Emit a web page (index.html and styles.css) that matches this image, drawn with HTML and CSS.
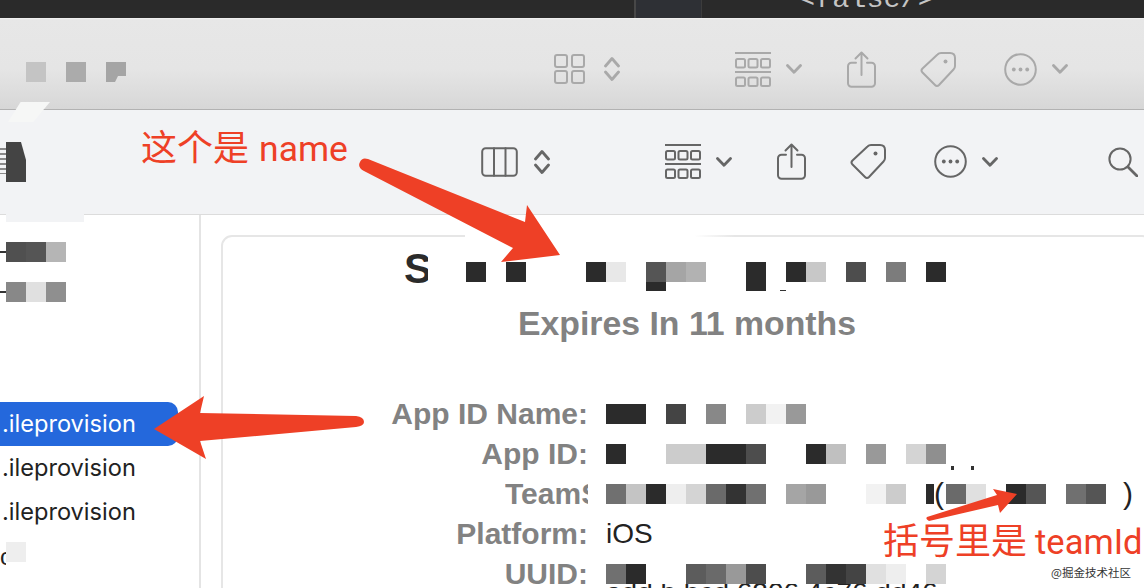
FILE: index.html
```html
<!DOCTYPE html>
<html lang="zh-CN">
<head>
  <meta charset="UTF-8" />
  <title>Provisioning profile</title>
  <link rel="stylesheet" href="styles.css">
</head>
<body>
  <svg class="defs" width="0" height="0">
    <symbol id="i-grid" viewBox="0 0 32 30">
      <rect x="2" y="1" width="12" height="12" rx="2"/><rect x="19" y="1" width="12" height="12" rx="2"/>
      <rect x="2" y="17" width="12" height="12" rx="2"/><rect x="19" y="17" width="12" height="12" rx="2"/>
    </symbol>
    <symbol id="i-cols" viewBox="0 0 37 30">
      <rect x="1.2" y="1.2" width="34.6" height="27.6" rx="3.5"/><path d="M13 1.2V28.8M24.5 1.2V28.8"/>
    </symbol>
    <symbol id="i-updown" viewBox="0 0 16 26">
      <path class="thick" d="M1.5 10L8 2.5L14.5 10M1.5 16L8 23.5L14.5 16"/>
    </symbol>
    <symbol id="i-group" viewBox="0 0 36 35">
      <path d="M0 1H36M0 20H36"/>
      <rect x="1" y="7" width="9" height="8.5" rx="1.5"/><rect x="13.5" y="7" width="9" height="8.5" rx="1.5"/><rect x="26" y="7" width="9" height="8.5" rx="1.5"/>
      <rect x="1" y="25.5" width="9" height="8.5" rx="1.5"/><rect x="13.5" y="25.5" width="9" height="8.5" rx="1.5"/><rect x="26" y="25.5" width="9" height="8.5" rx="1.5"/>
    </symbol>
    <symbol id="i-chev" viewBox="0 0 16 10">
      <path class="thick" d="M1.5 1.5L8 8.2L14.5 1.5"/>
    </symbol>
    <symbol id="i-share" viewBox="0 0 29 37">
      <path d="M9 11.7H4.5A3.5 3.5 0 0 0 1 15.2V32.2A3.5 3.5 0 0 0 4.5 35.7H24.5A3.5 3.5 0 0 0 28 32.2V15.2A3.5 3.5 0 0 0 24.5 11.7H20"/>
      <path d="M14.5 1.5V24M8.5 7.5L14.5 1.5L20.5 7.5"/>
    </symbol>
    <symbol id="i-tag" viewBox="0 0 37 37">
      <path d="M21 2H30Q35 2 35 7V15Q35 17 33.5 18.5L19 34Q17 36 15 34L2.5 21.5Q.5 19.5 2.5 17.5L17.5 3.5Q19 2 21 2Z"/>
      <circle class="dot" cx="25.5" cy="10.5" r="2"/>
    </symbol>
    <symbol id="i-more" viewBox="0 0 33 33">
      <circle cx="16.5" cy="16.5" r="15.3"/>
      <circle class="dot" cx="9.8" cy="16.5" r="1.9"/><circle class="dot" cx="16.5" cy="16.5" r="1.9"/><circle class="dot" cx="23.2" cy="16.5" r="1.9"/>
    </symbol>
    <symbol id="i-search" viewBox="0 0 30 30">
      <circle cx="12" cy="12" r="10.6"/><path class="thick" d="M20 20L29 29"/>
    </symbol>
  </svg>

  <div class="topstrip">
    <div class="pane"></div>
    <div class="plist">&lt;false/&gt;</div>
  </div>

  <div class="toolbar toolbar-back">
    <div class="mosaic title-bits">
      <span class="c4"></span><span class="sk"></span><span class="ab"></span><span class="sk"></span><span class="a5 notch"></span>
    </div>
    <svg class="ic w32"><use href="#i-grid"/></svg>
    <svg class="ic w16 ml19 h26"><use href="#i-updown"/></svg>
    <svg class="ic w36 ml115 h35"><use href="#i-group"/></svg>
    <svg class="ic w16 ml15 h10"><use href="#i-chev"/></svg>
    <svg class="ic w29 ml45 h37"><use href="#i-share"/></svg>
    <svg class="ic w37 ml44 h37"><use href="#i-tag"/></svg>
    <svg class="ic w33 ml47 h33"><use href="#i-more"/></svg>
    <svg class="ic w16 ml15 h10"><use href="#i-chev"/></svg>
  </div>

  <div class="toolbar toolbar-front">
    <svg class="ic w37 h30"><use href="#i-cols"/></svg>
    <svg class="ic w16 ml16 h26"><use href="#i-updown"/></svg>
    <svg class="ic w36 ml115 h35"><use href="#i-group"/></svg>
    <svg class="ic w16 ml15 h10"><use href="#i-chev"/></svg>
    <svg class="ic w29 ml45 h37"><use href="#i-share"/></svg>
    <svg class="ic w37 ml44 h37"><use href="#i-tag"/></svg>
    <svg class="ic w33 ml47 h33"><use href="#i-more"/></svg>
    <svg class="ic w16 ml15 h10"><use href="#i-chev"/></svg>
    <svg class="ic w30 ml110 h30"><use href="#i-search"/></svg>
  </div>

  <div class="content">
    <aside class="sidebar">
      <div class="side-row"><i class="tick"></i><div class="mosaic"><span class="c50"></span><span class="c55"></span><span class="b5"></span></div></div>
      <div class="side-row"><i class="tick"></i><div class="mosaic"><span class="c88"></span><span class="e0"></span><span class="c8f"></span></div></div>
      <ul class="files">
        <li class="selected">.ileprovision</li>
        <li>.ileprovision</li>
        <li>.ileprovision</li>
      </ul>
      <div class="side-row side-last"><i class="cut">c</i><div class="mosaic"><span class="ee"></span></div></div>
    </aside>

    <main class="main">
      <section class="card">
        <div class="card-title">
          <b class="initial">S</b>
          <div class="mosaic">
            <span class="c2b"></span><span class="sk"></span><span class="c2b"></span><span class="sk"></span><span class="sk"></span><span class="sk"></span>
            <span class="c2b"></span><span class="e8"></span><span class="sk"></span><span class="drop"></span><span class="a5"></span><span class="b2"></span>
            <span class="sk"></span><span class="sk"></span><span class="c2b long"></span><span class="sk dash"></span>
            <span class="c2b"></span><span class="c8"></span><span class="sk"></span><span class="c4d"></span><span class="sk"></span><span class="c7c"></span><span class="sk"></span><span class="c2b"></span>
          </div>
        </div>
        <h2 class="expires">Expires In 11 months</h2>

        <div class="info">
          <div class="label">App ID Name:</div>
          <div class="mosaic">
            <span class="c2b"></span><span class="c2b"></span><span class="sk"></span><span class="c44"></span><span class="sk"></span><span class="c88"></span>
            <span class="sk"></span><span class="cc"></span><span class="f2"></span><span class="c99"></span>
          </div>

          <div class="label">App ID:</div>
          <div class="mosaic">
            <span class="c2b"></span><span class="sk"></span><span class="sk"></span><span class="cc"></span><span class="cc"></span><span class="c2b"></span><span class="c2b"></span><span class="c4d"></span>
            <span class="sk"></span><span class="sk"></span><span class="c2b"></span><span class="c0"></span><span class="sk"></span><span class="c99"></span><span class="sk"></span><span class="d4"></span><span class="c8f"></span>
            <span class="sk pip"></span><span class="sk pip"></span>
          </div>

          <div class="label"><span class="label-cut">TeamS</span></div>
          <div class="mosaic">
            <span class="c70"></span><span class="c4"></span><span class="c2b"></span><span class="ee"></span><span class="d4"></span><span class="c6a"></span><span class="c33"></span><span class="c70"></span>
            <span class="sk"></span><span class="a5"></span><span class="c99"></span><span class="sk"></span><span class="sk"></span><span class="f2"></span><span class="cc"></span><span class="sk"></span>
            <span class="sliver"></span><span class="paren">(</span><span class="c6a"></span><span class="e0"></span><span class="sk"></span>
            <span class="c2b"></span><span class="c55"></span><span class="sk"></span><span class="c70"></span><span class="c55 tail"></span><span class="sk"></span><span class="paren paren-end">)</span>
          </div>

          <div class="label">Platform:</div>
          <div class="value">iOS</div>

          <div class="label">UUID:</div>
          <div class="uuid">
            <div class="uuid-text">add b bcd 6206 4c76 dd46</div>
            <div class="mosaic uuid-cover">
              <span class="c70"></span><span class="c2b"></span><span class="sk"></span><span class="sk"></span><span class="c5a"></span><span class="c6a"></span><span class="c99"></span><span class="c4d"></span>
              <span class="sk"></span><span class="sk"></span><span class="c5a"></span><span class="c33"></span><span class="c44"></span><span class="e0"></span><span class="ee"></span><span class="sk"></span><span class="d4"></span>
            </div>
          </div>
        </div>
      </section>
    </main>
  </div>

  <!-- stuff painted over the screenshot -->
  <div class="smudge-flap"></div>
  <div class="smudge"></div>
  <div class="smudge-ink"></div>
  <div class="smudge-lines"></div>
  <div class="card-fade"></div>

  <svg class="arrows" viewBox="0 0 1144 588">
    <path d="M360 162Q362 157 368 159L525 222L527 205L560 255L501 262L513 248L364 171Q357 167 360 162Z"/>
    <path d="M154 429L204 396L200 413L356 416Q364 417 364 422Q364 426 356 427L200 441L206 459Z"/>
    <path d="M927 517L997 495L993 489L1017 494L1000 513L998 505L929 521Q925 519 927 517Z"/>
  </svg>
  <div class="note note-name">这个是 <span class="latin latin-name">name</span></div>
  <div class="note note-team">括号里是 <span class="latin">teamId</span></div>
  <div class="watermark">@掘金技术社区</div>
</body>
</html>
```

FILE: styles.css
```css
* { box-sizing: border-box; }
html, body {
  height: 588px;
  overflow: hidden;
}
body {
  margin: 0;
  position: relative;
  background-color: #fff;
  font-family: "Liberation Sans", Arial, sans-serif;
  color: #222;
}
.defs { position: absolute; }

/* sliver of the window behind */
.topstrip {
  display: flex;
  height: 18px;
  background-color: #2a2a2a;
  overflow: hidden;
}
.pane {
  width: 68px;
  margin-left: 634px;
  background-color: #2e3035;
  border-left: 2px solid #474747;
  border-right: 1px solid #3c3c3c;
}
.plist {
  margin-left: 96px;
  margin-top: -15px;
  font-family: "Liberation Mono", monospace;
  font-size: 28.5px;
  line-height: 30px;
  color: #c4c4c4;
}

/* toolbars */
.toolbar {
  display: flex;
  align-items: center;
}
.toolbar-back {
  height: 92px;
  padding-top: 10px;
  background: linear-gradient(#e7e7e7 0%, #e5e5e5 55%, #d7d7d7 100%);
  border-top: 1px solid #efefef;
  border-bottom: 1px solid #b2b2b2;
  color: #a9a9a9;
}
.toolbar-front {
  height: 105px;
  padding-left: 481px;
  padding-bottom: 1px;
  background-color: #f2f3f5;
  border-bottom: 1px solid #dcdcdc;
  color: #666;
}
.title-bits {
  width: 553px;
  padding-left: 26px;
  margin-top: 6px;
}
.notch { clip-path: polygon(0 0, 100% 0, 100% 70%, 60% 70%, 45% 100%, 0 100%); }

.ic {
  flex: none;
  fill: none;
  stroke: currentColor;
  stroke-width: 2;
  stroke-linecap: round;
  stroke-linejoin: round;
}
.ic .thick, .thick { stroke-width: 2.8; }
.dot { fill: currentColor; stroke: none; }
.w16 { width: 16px; }
.w29 { width: 29px; }
.w30 { width: 30px; }
.w32 { width: 32px; height: 30px; }
.w33 { width: 33px; }
.w36 { width: 36px; }
.w37 { width: 37px; }
.h10 { height: 10px; }
.h26 { height: 26px; }
.h30 { height: 30px; }
.h33 { height: 33px; }
.h35 { height: 35px; }
.h37 { height: 37px; }
.ml15 { margin-left: 15px; }
.ml16 { margin-left: 16px; }
.ml19 { margin-left: 19px; }
.ml44 { margin-left: 44px; }
.ml45 { margin-left: 45px; }
.ml47 { margin-left: 47px; }
.ml110 { margin-left: 110px; }
.ml115 { margin-left: 115px; }

/* body of the window */
.content {
  display: flex;
  height: 373px;
  overflow: hidden;
}
.sidebar {
  flex: none;
  width: 201px;
  padding-top: 27px;
  border-right: 2px solid #e4e4e4;
}
.side-row {
  display: flex;
  align-items: center;
  height: 20px;
  margin-bottom: 20px;
}
.tick {
  width: 6px;
  height: 2px;
  background-color: #333;
}
.cut {
  width: 6px;
  overflow: hidden;
  font-style: normal;
  font-size: 24px;
  line-height: 20px;
  margin-top: 10px;
}
.files {
  list-style: none;
  margin: 100px 0 8px;
  padding: 0;
  font-family: Inter, sans-serif;
  font-size: 23.6px;
}
.files li {
  height: 44px;
  width: 178px;
  padding-left: 2px;
  line-height: 44px;
  color: #222;
}
.files .selected {
  background-color: #2468dc;
  color: #fff;
  border-radius: 0 10px 10px 0;
}
.main {
  flex: 1;
  min-width: 0;
  padding: 20px 0 0 20px;
}
.card {
  width: 932px;
  height: 400px;
  padding-top: 25px;
  border: 2px solid #e6e6e6;
  border-radius: 11px;
}
.card-title {
  display: flex;
  height: 20px;
  padding-left: 181px;
}
.initial {
  width: 24px;
  height: 34px;
  margin-top: -10px;
  margin-right: 38px;
  overflow: hidden;
  font-size: 42px;
  line-height: 34px;
  color: #2b2b2b;
}
.expires {
  margin: 21px 0 51px;
  text-align: center;
  font-size: 33.8px;
  line-height: 40px;
  font-weight: bold;
  color: #828282;
}
.info {
  display: grid;
  grid-template-columns: 365px 1fr;
  grid-auto-rows: 40px;
  column-gap: 18px;
  align-items: center;
}
.label {
  display: flex;
  justify-content: flex-end;
  font-size: 30px;
  font-weight: bold;
  color: #828282;
  white-space: nowrap;
}
.label-cut {
  width: 83px;
  overflow: hidden;
}
.value {
  font-size: 28px;
}
.uuid {
  display: grid;
  grid-template-rows: 20px;
}
.uuid-text {
  grid-area: 1 / 1;
  height: 30px;
  margin-top: 14px;
  font-size: 28px;
  line-height: 30px;
  white-space: nowrap;
}
.uuid-cover {
  grid-area: 1 / 1;
  position: relative;
  background-color: #fff;
  width: 400px;
}

/* pixelated blocks */
.mosaic {
  display: flex;
  align-items: flex-start;
  height: 20px;
}
.mosaic > span {
  flex: none;
  width: 20px;
  height: 20px;
}
.c2b { background-color: #2b2b2b; }
.c33 { background-color: #333; }
.c44 { background-color: #444; }
.c4d { background-color: #4d4d4d; }
.c50 { background-color: #505050; }
.c55 { background-color: #555; }
.c5a { background-color: #5c5c5c; }
.c6a { background-color: #6a6a6a; }
.c70 { background-color: #707070; }
.c7c { background-color: #7c7c7c; }
.c88 { background-color: #888; }
.c8f { background-color: #8f8f8f; }
.c99 { background-color: #999; }
.a5 { background-color: #a5a5a5; }
.ab { background-color: #ababab; }
.b2 { background-color: #b2b2b2; }
.b5 { background-color: #b5b5b5; }
.c0 { background-color: #c0c0c0; }
.c4 { background-color: #c4c4c4; }
.c8 { background-color: #c8c8c8; }
.cc { background-color: #ccc; }
.d4 { background-color: #d4d4d4; }
.e0 { background-color: #e0e0e0; }
.e8 { background-color: #e8e8e8; }
.ee { background-color: #eee; }
.f2 { background-color: #f2f2f2; }
.mosaic > .long { height: 29px; }
.mosaic > .drop {
  height: 29px;
  background: linear-gradient(#555 20px, #2b2b2b 20px);
}
.mosaic > .dash {
  height: 30px;
  background: linear-gradient(#333, #333) 14px 28px / 6px 1px no-repeat;
}
.mosaic > .pip {
  height: 26px;
  background: linear-gradient(#333, #333) 5px 22px / 3px 4px no-repeat;
}
.mosaic > .sliver {
  width: 8px;
  background-color: #2b2b2b;
}
.mosaic > .paren {
  width: 12px;
  font-size: 30px;
  line-height: 20px;
  color: #222;
}
.mosaic > .paren-end { margin-left: -3px; }
.mosaic > .tail {
  height: 25px;
  background: linear-gradient(#555 20px, #fff 20px);
}

/* retouched bits at the left */
.smudge-flap {
  position: absolute;
  left: 8px;
  top: 102px;
  width: 42px;
  height: 20px;
  background-color: #f6f7f6;
  clip-path: polygon(30% 0, 100% 0, 60% 100%, 0 100%);
}
.smudge {
  position: absolute;
  left: 6px;
  top: 122px;
  width: 78px;
  height: 100px;
  background-color: #f2f3f5;
}
.smudge-ink {
  position: absolute;
  left: 6px;
  top: 142px;
  width: 20px;
  height: 40px;
  background-color: #444;
  clip-path: polygon(0 0, 75% 0, 100% 45%, 100% 100%, 0 100%);
}
.smudge-lines {
  position: absolute;
  left: 0;
  top: 148px;
  width: 6px;
  height: 26px;
  background: repeating-linear-gradient(#888 0 2px, #f2f3f5 2px 5px);
}
.card-fade {
  position: absolute;
  left: 465px;
  top: 235px;
  width: 270px;
  height: 2px;
  background: linear-gradient(90deg, #fff 85%, #e6e6e6);
}

/* annotations */
.arrows {
  position: absolute;
  left: 0;
  top: 0;
  width: 1144px;
  height: 588px;
  fill: #ee4026;
}
.note {
  position: absolute;
  font-family: "Noto Sans CJK SC", sans-serif;
  font-size: 36px;
  line-height: 40px;
  color: #ee4026;
  white-space: nowrap;
}
.latin {
  font-family: Roboto, sans-serif;
  font-size: 34.5px;
}
.latin-name {
  font-size: 35.5px;
  margin-left: 2px;
}
.note-name { left: 141px; top: 125px; }
.note-team { left: 883px; top: 518px; }
.watermark {
  position: absolute;
  left: 1051px;
  top: 564px;
  font-family: "Noto Sans CJK SC", sans-serif;
  font-size: 11.5px;
  line-height: 16px;
  color: #333;
  text-shadow: 0 0 2px #fff;
}
```
